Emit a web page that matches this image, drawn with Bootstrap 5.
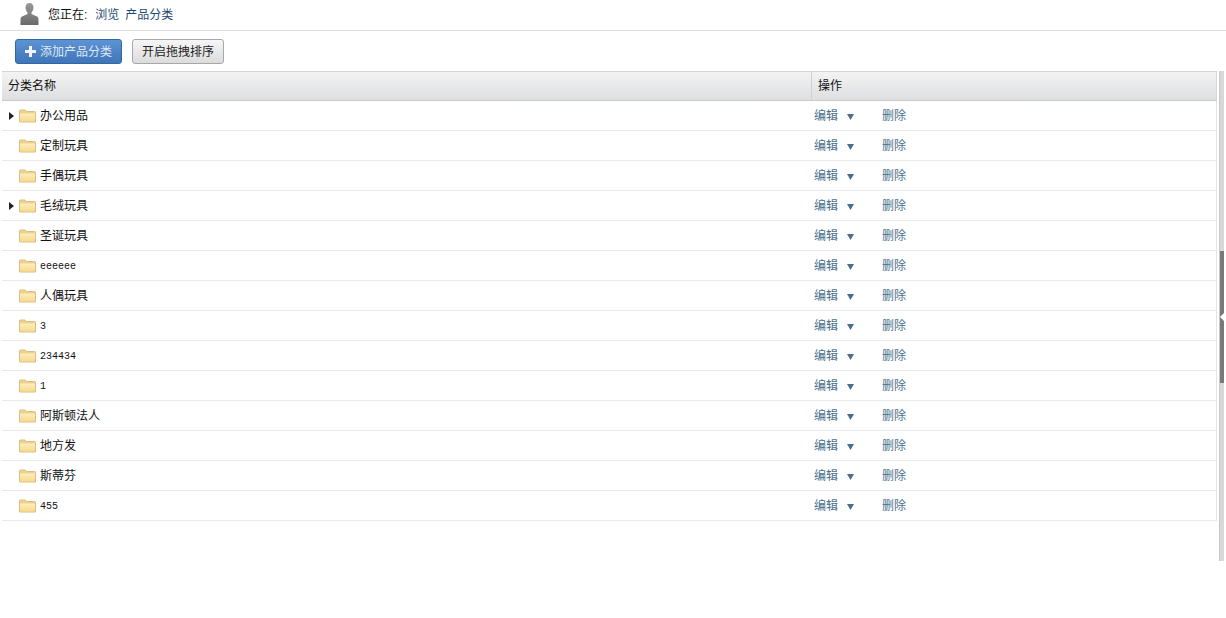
<!DOCTYPE html>
<html lang="zh">
<head>
<meta charset="utf-8">
<title>产品分类</title>
<link rel="stylesheet" href="https://cdn.jsdelivr.net/npm/bootstrap@5.3.0/dist/css/bootstrap.min.css">
<style>
html,body{height:100%;overflow:hidden}
body{background:#fff;color:#111;font:12px/1.2 "Liberation Sans","Noto Sans CJK SC",sans-serif}
.crumbbar{height:31px;border-bottom:1px solid #dedede;padding-left:20px;font-size:12px}
.crumbbar svg{margin-right:9px;margin-top:-3px}
.crumbbar a{color:#1f4a75;text-decoration:none;margin-left:6px}
.crumbbar span{margin-right:2px}
.toolbar{height:40px;padding:8px 0 0 15px;gap:10px}
.tool-add,.tool-sort{height:25px;font-size:12px;line-height:23px;padding:1px 0 0;border-radius:3px;--bs-btn-font-size:12px}
.tool-add{width:107px;color:#dfe8f3;background:linear-gradient(#5e93d3,#3f76ba);border:1px solid #33689f;display:flex;align-items:center;justify-content:center;gap:4px}
.tool-add svg{margin-top:-1px}
.tool-add:hover{color:#fff;background:#3f76ba}
.tool-sort{width:92px;color:#222;background:linear-gradient(#f6f6f6,#dcdcdc);border:1px solid #a8a8a8}
.content-wrap{padding-left:2px;height:490px;gap:2px}
.table-area{width:1215px}
table.cate-table{table-layout:fixed;width:1215px;margin:0;border-collapse:separate;border-spacing:0;--bs-table-bg:transparent}
.cate-table th{height:30px;padding:0 0 0 6px;font-weight:400;font-size:12px;color:#111;background:linear-gradient(#f3f3f3,#dedfe1);border-top:1px solid #d4d4d4;border-bottom:1px solid #c9c9c9;vertical-align:middle}
.cate-table th+th{border-left:1px solid #d0d0d0;padding-left:6px;border-right:1px solid #d8d8d8}
.cate-table td{height:30px;padding:0;border-bottom:1px solid #e9e9e9;vertical-align:middle;font-size:12px;color:#111}
.cate-table td+td{border-right:1px solid #e4e4e4}
.name-cell{display:flex;align-items:center;height:29px}
.name-cell span:last-child{padding-top:1px}
.tree-arrow{width:5px;height:8px;margin-left:7px;margin-right:5px;flex:none}
.tree-gap{width:17px;flex:none}
.name-cell svg.folder{margin-right:4px;flex:none}
.latin-name{font:10px "Liberation Mono",monospace}
.ops{display:flex;align-items:center;padding:1px 0 0 3px;height:29px}
.ops a{color:#4a6f8c;text-decoration:none}
.ops svg{margin:1px 0 0 9px}
.ops a.del{margin-left:28px}
.splitter{width:5px;height:490px;background:#d8d8d8;border-left:1px solid #c8c8c8}
.splitter-thumb{height:132px;margin-top:180px;background:#77797b;position:relative}
.splitter-thumb::after{content:"";position:absolute;left:0;top:62px;border:4px solid transparent;border-right-color:#fff;border-left:0}
</style>
</head>
<body>
<div class="crumbbar d-flex align-items-center">
<svg width="19" height="24" viewBox="0 0 19 24"><defs><linearGradient id="pg" x1="0" y1="0" x2="0" y2="1"><stop offset="0" stop-color="#9a9a9a"/><stop offset="1" stop-color="#6a6a6a"/></linearGradient><linearGradient id="fg" x1="0" y1="0" x2="0" y2="1"><stop offset="0" stop-color="#fdeebd"/><stop offset="1" stop-color="#f6d98c"/></linearGradient></defs><path d="M9.500 1c2.600 0 4 2 4 4.500 0 2-1 4-2 5v1.500l5.500 2.500c1 .5 1.500 1.500 1.500 3V23H.5v-5.500c0-1.500.5-2.500 1.500-3L7.500 12v-1.500c-1-1-2-3-2-5C5.500 3 6.900 1 9.500 1z" fill="url(#pg)"/></svg>
<span>您正在:</span><a href="#">浏览</a><a href="#">产品分类</a>
</div>
<div class="toolbar d-flex align-items-start">
<button type="button" class="btn tool-add"><svg width="11" height="11" viewBox="0 0 11 11"><path d="M4 0h3v4h4v3H7v4H4V7H0V4h4z" fill="#f2f6fb"/></svg>添加产品分类</button>
<button type="button" class="btn tool-sort">开启拖拽排序</button>
</div>
<div class="content-wrap d-flex">
<div class="table-area">
<table class="table cate-table">
<colgroup><col style="width:809px"><col></colgroup>
<thead><tr><th>分类名称</th><th>操作</th></tr></thead>
<tbody id="rows"></tbody>
</table>
</div>
<div class="splitter"><div class="splitter-thumb"></div></div>
</div>
<script>
var rows=[["办公用品",1],["定制玩具"],["手偶玩具"],["毛绒玩具",1],["圣诞玩具"],["eeeeee",0,1],["人偶玩具"],["3",0,1],["234434",0,1],["1",0,1],["阿斯顿法人"],["地方发"],["斯蒂芬"],["455",0,1]];
var folder='<svg class="folder" width="17" height="14" viewBox="0 0 17 14"><path d="M.5 2c0-.7.4-1 1-1h4.500l1.500 1.500h8c.6 0 1 .3 1 1v9.500h-16z" fill="#efd28a" stroke="#d8bf85"/><path d="M1 4.500h15v8H1z" fill="url(#fg)"/></svg>';
var arrow='<svg class="tree-arrow" viewBox="0 0 5 8"><path d="M0 0l5 4-5 4z" fill="#222"/></svg>';
document.getElementById('rows').innerHTML=rows.map(function(r){
return '<tr><td><div class="name-cell">'+(r[1]?arrow:'<span class="tree-gap"></span>')+folder+'<span class="'+(r[2]?'latin-name':'')+'">'+r[0]+'</span></div></td><td><div class="ops"><a href="#">编辑</a><svg width="7" height="6" viewBox="0 0 7 6"><path d="M0 0h7L3.500 6z" fill="#4a6f8c"/></svg><a class="del" href="#">删除</a></div></td></tr>';
}).join('');
</script>
<script src="https://cdn.jsdelivr.net/npm/bootstrap@5.3.0/dist/js/bootstrap.bundle.min.js"></script>
</body>
</html>
